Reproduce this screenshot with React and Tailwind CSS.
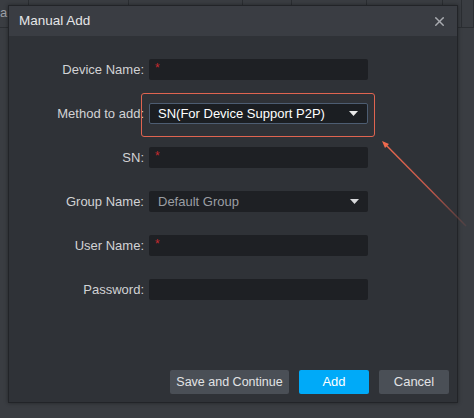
import { X } from 'lucide-react';

const COLS = [29, 100, 114, 49, 75, 76, 19, 12];

function Caret({ className }) {
  return (
    <svg width="9" height="5" viewBox="0 0 9 5" className={className}>
      <path d="M0 0h9L4.5 5z" fill="currentColor" />
    </svg>
  );
}

function Field({ label, children }) {
  return (
    <div className="flex items-center h-[21px]">
      <div className="w-[135px] text-right text-[13px] text-[#d2d3d5] whitespace-nowrap">{label}</div>
      <div className="ml-[5px] relative">{children}</div>
    </div>
  );
}

function TextBox({ required }) {
  return (
    <div className="w-[219px] h-[21px] rounded-[2px] bg-[#1e2024] relative">
      {required && <span className="absolute left-[6px] top-[3px] text-[12px] leading-none text-[#c62a2f]">*</span>}
    </div>
  );
}

export default function App() {
  return (
    <div className="relative w-[474px] h-[418px] bg-[#3a3d42] overflow-hidden" style={{ fontFamily: '"Liberation Sans", Arial, sans-serif' }}>
      {/* table header behind the modal */}
      <div className="flex h-[28px] border-b border-[#2b2e32]">
        {COLS.map((w, i) => (
          <div key={i} style={{ width: w }} className="shrink-0 border-r border-[#2b2e32] text-[13px] text-[#9ea1a6] leading-[26px] overflow-hidden">
            {i === 0 ? 'a' : ''}
          </div>
        ))}
      </div>

      {/* Manual Add dialog */}
      <div className="absolute left-[8px] top-[5px] w-[450px] h-[398px] border border-[#222428] flex flex-col shadow-[0_0_4px_rgba(0,0,0,0.4)]">
        <div className="h-[30px] bg-[#3a3d43] flex items-center justify-between pl-[10px] pr-[10px]">
          <span className="text-[13.5px] text-[#e4e5e7]">Manual Add</span>
          <X size={15} strokeWidth={2.2} className="text-[#a9acb1]" />
        </div>
        <div className="flex-1 bg-[#2f3237] flex flex-col">
          <div className="flex flex-col gap-[23px] pt-[23px]">
            <Field label="Device Name:">
              <TextBox required />
            </Field>
            <Field label="Method to add:">
              <div className="w-[219px] h-[21px] rounded-[2px] bg-[#1b1e22] border border-[#4d5d72] flex items-center justify-between pl-[8px] pr-[9px]">
                <span className="text-[13px] text-white">SN(For Device Support P2P)</span>
                <Caret className="text-[#e8e8e8]" />
              </div>
              <div className="absolute -left-[8px] -top-[10px] -right-[7px] -bottom-[13px] border-[1.5px] border-[#df6450] rounded-[3px]" />
            </Field>
            <Field label="SN:">
              <TextBox required />
            </Field>
            <Field label="Group Name:">
              <div className="w-[219px] h-[21px] rounded-[2px] bg-[#1e2024] flex items-center justify-between pl-[9px] pr-[9px]">
                <span className="text-[13px] text-[#9b9ea3]">Default Group</span>
                <Caret className="text-[#d8d9db]" />
              </div>
            </Field>
            <Field label="User Name:">
              <TextBox required />
            </Field>
            <Field label="Password:">
              <TextBox />
            </Field>
          </div>
          <div className="mt-auto mb-[8px] flex justify-end gap-[10px] pr-[8px]">
            <button className="w-[119px] h-[24px] rounded-[2px] bg-[#4a4f56] text-[12.5px] text-[#e2e3e5]">Save and Continue</button>
            <button className="w-[70px] h-[24px] rounded-[2px] bg-[#00aaf8] text-[13px] text-white">Add</button>
            <button className="w-[70px] h-[24px] rounded-[2px] bg-[#4a4f56] text-[13px] text-[#e2e3e5]">Cancel</button>
          </div>
        </div>
      </div>

      {/* annotation arrow */}
      <svg className="absolute left-0 top-0 pointer-events-none" width="474" height="418">
        <defs>
          <linearGradient id="fade" x1="383" y1="142" x2="466" y2="226" gradientUnits="userSpaceOnUse">
            <stop offset="0" stopColor="#f06a4e" />
            <stop offset="0.6" stopColor="#e0604f" stopOpacity="0.8" />
            <stop offset="1" stopColor="#c05a4e" stopOpacity="0.15" />
          </linearGradient>
        </defs>
        <line x1="384" y1="143" x2="466" y2="226" stroke="url(#fade)" strokeWidth="1.4" />
        <path d="M382 141 L389 144 L385 148 Z" fill="#f06a4e" />
      </svg>
    </div>
  );
}
